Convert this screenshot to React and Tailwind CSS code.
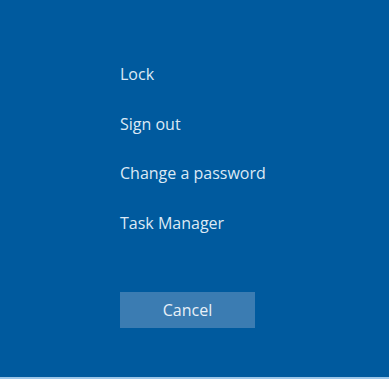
export default function App() {
  const items = ["Lock", "Sign out", "Change a password", "Task Manager"];
  return (
    <div
      className="w-[389px] h-[379px] bg-[#005a9e] flex flex-col overflow-hidden"
      style={{ fontFamily: '"Open Sans", "Noto Sans", sans-serif' }}
    >
      <div className="flex-1 flex flex-col pl-[120px] pt-[61px]">
        {items.map((t) => (
          <div key={t} className="h-[49.5px] text-[16px] leading-[26px] text-[#dce9f5]">
            {t}
          </div>
        ))}
        <button className="mt-[33px] w-[135px] h-[36px] bg-[#3b7cb2] text-[16px] text-[#e8f0f8] flex items-center justify-center">
          Cancel
        </button>
      </div>
      <div className="h-[2px] bg-[#9cc6e8]" />
    </div>
  );
}
